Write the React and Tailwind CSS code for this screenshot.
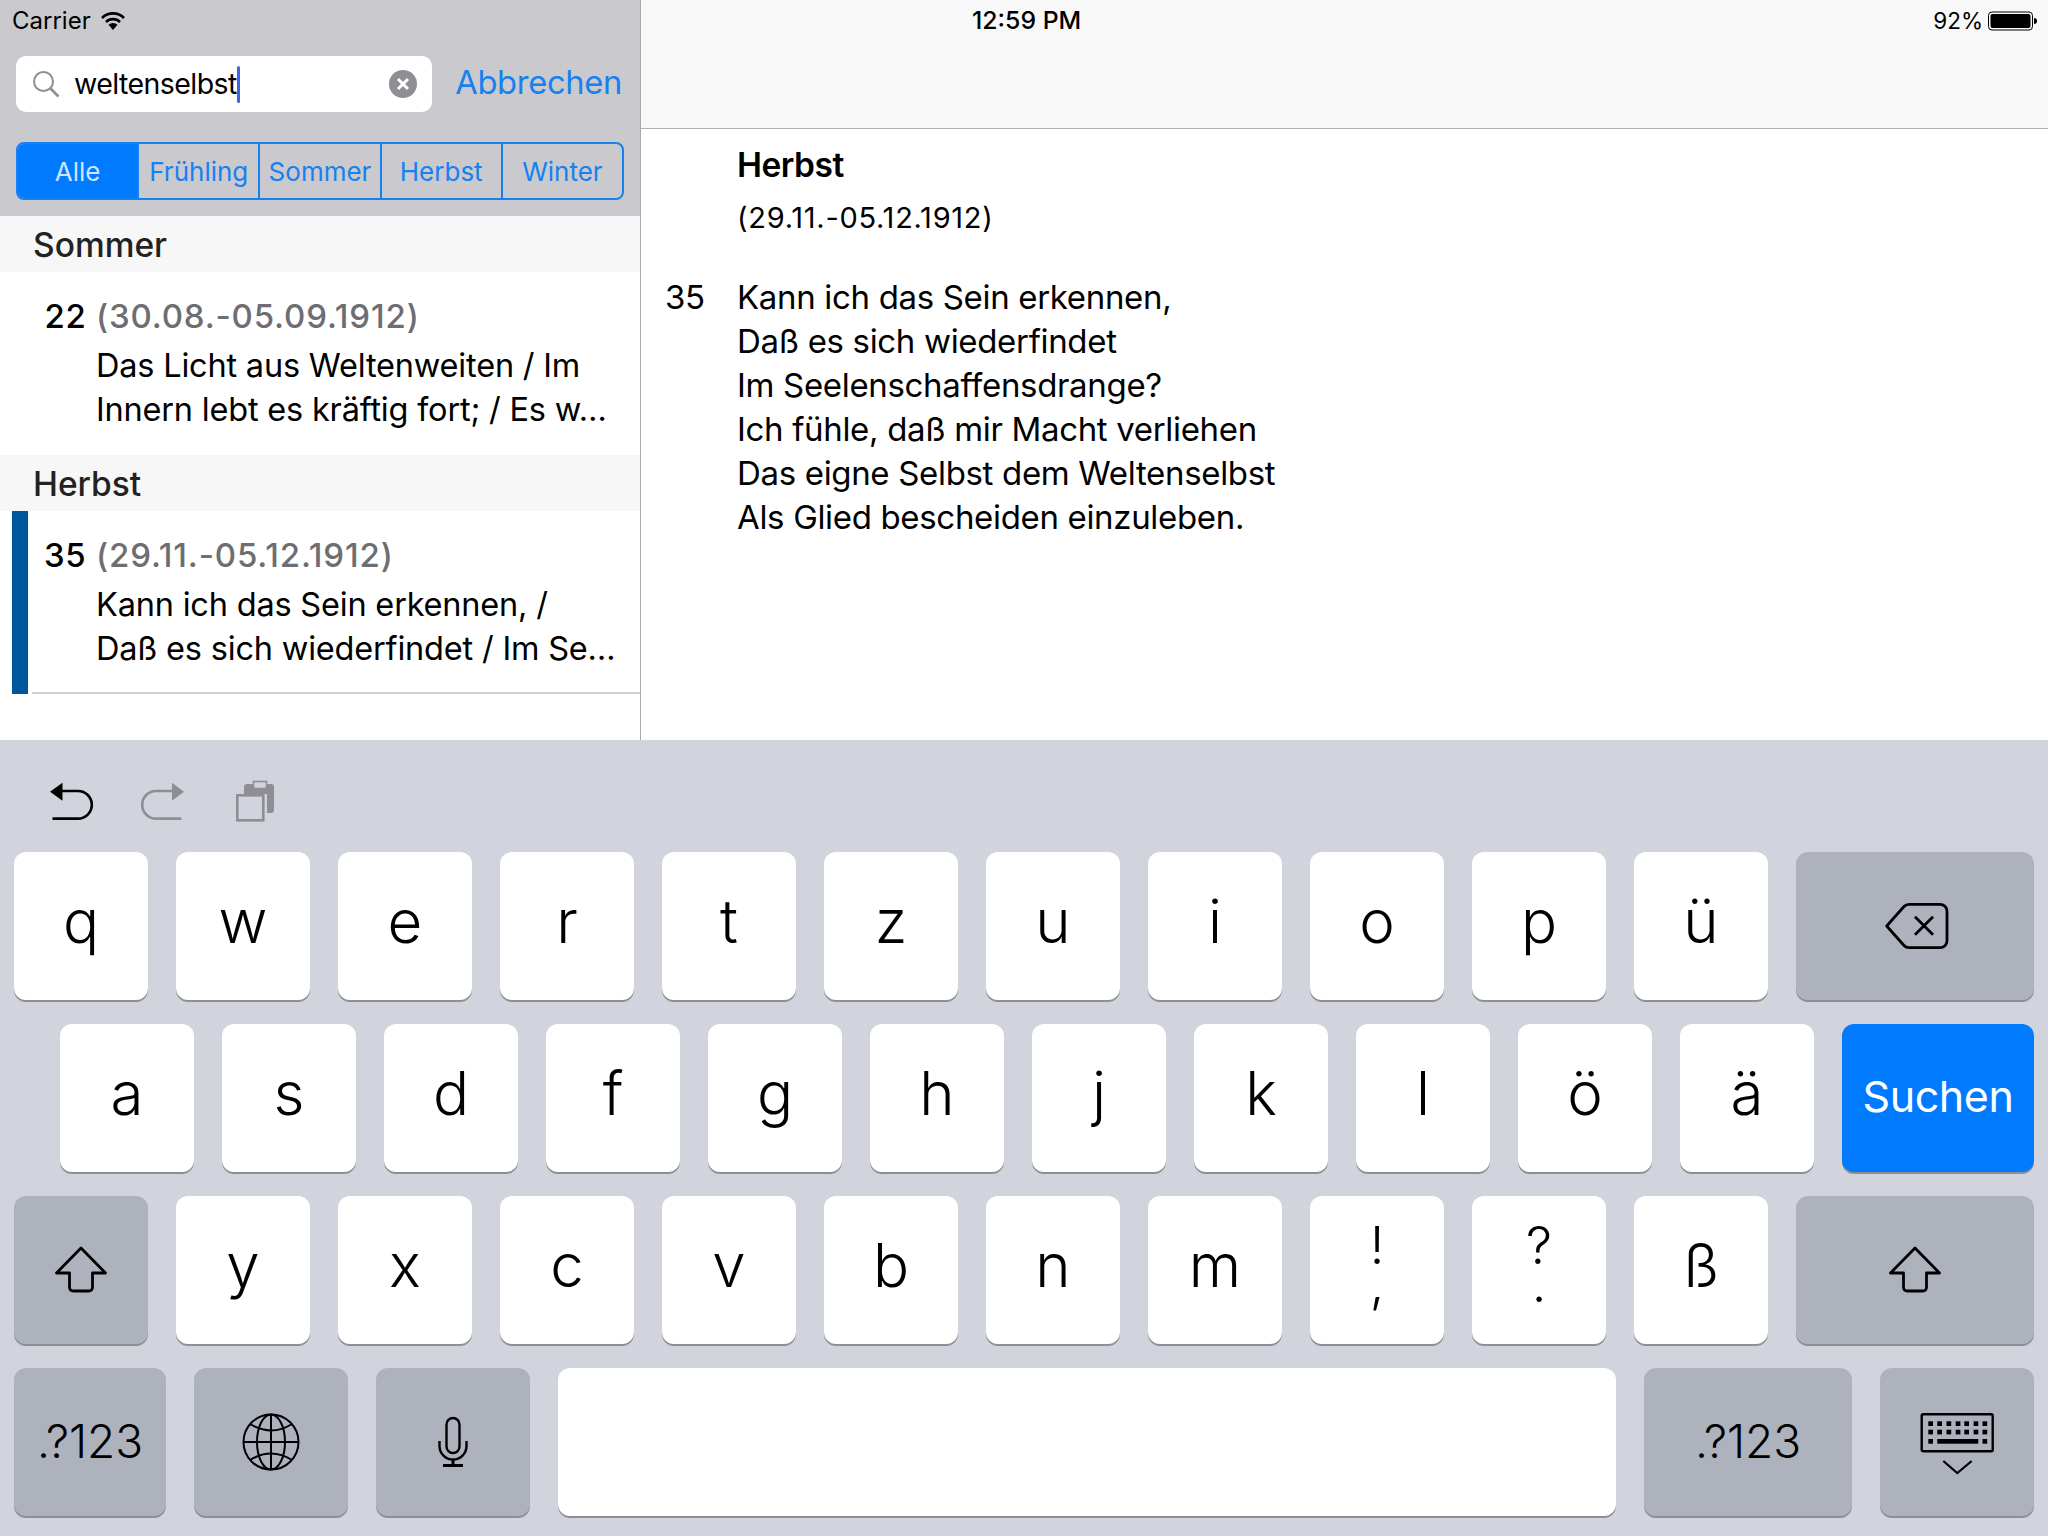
const F = "font-['Inter','Liberation_Sans',sans-serif]";

function Wifi() {
  return (
    <svg width="24" height="18" viewBox="0 0 24 18" fill="none" stroke="#000" strokeWidth="2.6">
      <path d="M1 6 A15.5 15.5 0 0 1 23 6" />
      <path d="M5 10 A10 10 0 0 1 19 10" />
      <path d="M12 18 L7.5 12.8 A6.5 6.5 0 0 1 16.5 12.8 Z" fill="#000" stroke="none" />
    </svg>
  );
}

function SearchIcon() {
  return (
    <svg width="28" height="28" viewBox="0 0 28 28" fill="none" stroke="#8e8e93" strokeWidth="2">
      <circle cx="11.5" cy="11.5" r="9.5" />
      <path d="M18.5 18.5 L26.5 26.5" strokeWidth="2.6" />
    </svg>
  );
}

function Battery() {
  return (
    <svg width="49" height="20" viewBox="0 0 49 20">
      <rect x="0.5" y="1" width="44" height="18" rx="3.5" fill="none" stroke="#000" strokeWidth="1" />
      <rect x="2.5" y="3" width="40" height="14" rx="2" fill="#000" />
      <path d="M46 7 A3 3 0 0 1 46 13 Z" fill="#000" />
    </svg>
  );
}

function Undo() {
  return (
    <svg width="46" height="44" viewBox="48 40 46 44" fill="none" stroke="#000" strokeWidth="2.6">
      <path d="M50 51.7 L62.5 42.7 V60.7 Z" fill="#000" stroke="none" />
      <path d="M62 51 H78 A13.8 13.8 0 0 1 78 78.6 H52.5" />
    </svg>
  );
}

function Redo() {
  return (
    <svg width="46" height="44" viewBox="140 40 46 44" fill="none" stroke="#8e8e93" strokeWidth="2.6">
      <path d="M184 51.7 L172 42.7 V60.7 Z" fill="#8e8e93" stroke="none" />
      <path d="M172 51 H156 A13.8 13.8 0 0 0 156 78.6 H181.5" />
    </svg>
  );
}

function Paste() {
  return (
    <svg width="40" height="42" viewBox="235 41 40 42" fill="none">
      <path d="M244 55 V48 Q244 45 247 45 H271 Q274 45 274 48 V71 Q274 74 271 74 H267 V55 Z" fill="#8e8e93" />
      <rect x="253.5" y="42.5" width="13" height="7" fill="#d1d4dc" stroke="#8e8e93" strokeWidth="1.6" />
      <rect x="237.3" y="56.3" width="26" height="25" stroke="#8e8e93" strokeWidth="2.6" />
    </svg>
  );
}

function Backspace() {
  return (
    <svg width="68" height="50" viewBox="0 0 68 50" fill="none" stroke="#000" strokeWidth="2.8" strokeLinejoin="round">
      <path d="M5.7 25 L23 5.5 Q25 3.3 28 3.3 H59 A7 7 0 0 1 66 10.3 V39.7 A7 7 0 0 1 59 46.7 H28 Q25 46.7 23 44.5 Z" />
      <path d="M34 15.7 L52 33.7 M52 15.7 L34 33.7" />
    </svg>
  );
}

function Shift() {
  return (
    <svg width="56" height="48" viewBox="0 0 56 48" fill="none" stroke="#000" strokeWidth="2.8" strokeLinejoin="round">
      <path d="M28 2 L3.5 27 H16.5 V41 Q16.5 45 20.5 45 H35.5 Q39.5 45 39.5 41 V27 H52.5 Z" />
    </svg>
  );
}

function Globe() {
  return (
    <svg width="58" height="58" viewBox="0 0 58 58" fill="none" stroke="#000" strokeWidth="2">
      <circle cx="29" cy="29" r="27.5" />
      <ellipse cx="29" cy="29" rx="14" ry="27.5" />
      <path d="M29 1.5 V56.5 M1.5 29 H56.5" />
      <path d="M8 11 Q29 24 50 11 M8 47 Q29 34 50 47" />
    </svg>
  );
}

function Mic() {
  return (
    <svg width="32" height="54" viewBox="0 0 32 54" fill="none" stroke="#000" strokeWidth="2.4">
      <rect x="9.5" y="3" width="13" height="35" rx="6.5" />
      <path d="M2.5 26 V31 A13.5 13.5 0 0 0 29.5 31 V26" />
      <path d="M16 44 V50 M6 50.5 H26" strokeWidth="3" />
    </svg>
  );
}

function KeyboardIcon() {
  const xs = [9.3, 18.3, 27.5, 36.7, 45.3, 54.6, 63.5];
  return (
    <svg width="76" height="66" viewBox="0 0 76 66" fill="none" className="mt-[4px]">
      <rect x="2.7" y="3.3" width="71" height="37" rx="1.5" stroke="#000" strokeWidth="2.4" />
      {xs.map((x) => (
        <rect key={`a${x}`} x={x} y="10.3" width="4.7" height="4.7" fill="#000" />
      ))}
      {xs.map((x) => (
        <rect key={`b${x}`} x={x} y="18.7" width="4.7" height="4.7" fill="#000" />
      ))}
      <rect x="9.3" y="28" width="4.7" height="4.7" fill="#000" />
      <rect x="18.3" y="28" width="41" height="4.7" fill="#000" />
      <rect x="63.5" y="28" width="4.7" height="4.7" fill="#000" />
      <path d="M24.3 50 L38.3 62 L52.7 50" stroke="#000" strokeWidth="2.2" />
    </svg>
  );
}

function Key({ children, dark, blue, w = "w-[134px]", cls = "" }) {
  const tone = blue
    ? "bg-[#007aff] text-white"
    : dark
      ? "bg-[#aeb2bd] text-black"
      : "bg-white text-black";
  return (
    <div
      className={`${w} ${tone} ${cls} h-[148px] shrink-0 rounded-[12px] shadow-[0_2px_0_#8e8e93] flex items-center justify-center text-[60px] font-light leading-none`}
    >
      {children}
    </div>
  );
}

function Letters({ list }) {
  return list.map((k) => (
    <Key key={k}>
      <span className="-mt-[10px]">{k}</span>
    </Key>
  ));
}

function Double({ top, bottom }) {
  return (
    <Key>
      <div className="text-center text-[52px] font-light leading-[38px] -mt-[10px]">
        {top}
        <br />
        {bottom}
      </div>
    </Key>
  );
}

function Seg({ children, active, first }) {
  return (
    <div
      className={`flex-1 h-full flex items-center justify-center text-[26px] ${first ? "" : "border-l-2 border-[#1681f0]"} ${active ? "bg-[#007aff] text-[#cfe4ff]" : "text-[#1681f0]"}`}
    >
      {children}
    </div>
  );
}

function SectionHead({ children }) {
  return (
    <div className="h-[56px] bg-[#f7f7f7] pl-[33px] pt-[3px] flex items-center text-[33.5px] font-medium text-[#222]">
      {children}
    </div>
  );
}

function RowText({ num, date, l1, l2 }) {
  return (
    <div className="pt-[22px]">
      <div className="h-[44px] flex items-center text-[33px] leading-none">
        <span className="w-[52px] font-medium text-black tabular-nums tracking-[-0.015em]">{num}</span>
        <span className="font-medium text-[#6e6e72] tracking-[0.025em]">{date}</span>
      </div>
      <div className="mt-[6px] pl-[52px] text-[32.5px] leading-[44px] text-black whitespace-nowrap tracking-[-0.006em]">
        <div>{l1}</div>
        <div>{l2}</div>
      </div>
    </div>
  );
}

export default function App() {
  return (
    <div className={`${F} w-[2048px] h-[1536px] overflow-hidden flex flex-col bg-white`}>
      <div className="h-[740px] flex">
        <div className="w-[641px] border-r border-[#a9a9ab] flex flex-col">
          <div className="h-[216px] bg-[#c9c9ce] flex flex-col">
            <div className="h-[40px] pl-[12px] pt-[2px] flex items-center gap-[10px] text-[24px] text-black">
              <span>Carrier</span>
              <Wifi />
            </div>
            <div className="mt-[16px] h-[56px] pl-[16px] pr-[18px] flex items-center justify-between">
              <div className="w-[416px] h-[56px] bg-white rounded-[10px] pl-[16px] pr-[15px] flex items-center">
                <SearchIcon />
                <div className="ml-[14px] flex items-center text-[28.5px] text-black tracking-[-0.02em]">
                  <span>weltenselbst</span>
                  <span className="w-[3px] h-[37px] bg-[#3f66e0] rounded-sm" />
                </div>
                <div className="ml-auto w-[28px] h-[28px] rounded-full bg-[#8e8e93] flex items-center justify-center">
                  <svg width="14" height="14" viewBox="0 0 14 14" stroke="#fff" strokeWidth="3">
                    <path d="M2 2 L12 12 M12 2 L2 12" />
                  </svg>
                </div>
              </div>
              <span className="text-[32.7px] text-[#1681f0] tracking-[-0.01em] -mt-[3px]">Abbrechen</span>
            </div>
            <div className="mt-[30px] mx-[16px] w-[608px] h-[58px] rounded-[8px] border-2 border-[#1681f0] flex overflow-hidden">
              <Seg active first>Alle</Seg>
              <Seg>Frühling</Seg>
              <Seg>Sommer</Seg>
              <Seg>Herbst</Seg>
              <Seg>Winter</Seg>
            </div>
          </div>
          <SectionHead>Sommer</SectionHead>
          <div className="h-[183px] pl-[44px]">
            <RowText
              num="22"
              date="(30.08.-05.09.1912)"
              l1="Das Licht aus Weltenweiten / Im"
              l2="Innern lebt es kräftig fort; / Es w…"
            />
          </div>
          <SectionHead>Herbst</SectionHead>
          <div className="h-[183px] flex">
            <div className="ml-[12px] w-[16px] bg-[#00569b]" />
            <div className="flex-1 ml-[4px] pl-[12px] border-b-2 border-[#d0d0d4]">
              <RowText
                num="35"
                date="(29.11.-05.12.1912)"
                l1="Kann ich das Sein erkennen, /"
                l2="Daß es sich wiederfindet / Im Se…"
              />
            </div>
          </div>
        </div>
        <div className="flex-1 flex flex-col">
          <div className="h-[129px] bg-[#f8f8f8] border-b border-[#b2b2b2]">
            <div className="h-[40px] pt-[1px] flex items-center pr-[11px] text-black">
              <span className="ml-[331px] font-medium text-[24.8px]">12:59 PM</span>
              <span className="ml-auto mr-[5px] text-[22.5px]">92%</span>
              <Battery />
            </div>
          </div>
          <div className="pl-[96px] pt-[14px] text-black relative">
            <div className="h-[44px] flex items-center text-[33.5px] font-semibold tracking-[-0.015em]">Herbst</div>
            <div className="mt-[9px] h-[44px] flex items-center text-[29px] tracking-[0.025em]">(29.11.-05.12.1912)</div>
            <div className="mt-[35px] flex -ml-[72px] text-[33px] leading-[44px] tracking-[-0.01em]">
              <div className="w-[72px]">35</div>
              <div>
                <div>Kann ich das Sein erkennen,</div>
                <div>Daß es sich wiederfindet</div>
                <div>Im Seelenschaffensdrange?</div>
                <div>Ich fühle, daß mir Macht verliehen</div>
                <div>Das eigne Selbst dem Weltenselbst</div>
                <div>Als Glied bescheiden einzuleben.</div>
              </div>
            </div>
          </div>
        </div>
      </div>

      <div className="flex-1 bg-[#d1d4dc] flex flex-col">
        <div className="h-[112px] pl-[48px] pt-[40px] flex items-start">
          <Undo />
          <div className="ml-[46px]"><Redo /></div>
          <div className="ml-[49px]"><Paste /></div>
        </div>
        <div className="flex gap-[28px] pl-[14px]">
          <Letters list={["q", "w", "e", "r", "t", "z", "u", "i", "o", "p", "ü"]} />
          <Key dark w="w-[238px]"><Backspace /></Key>
        </div>
        <div className="mt-[24px] flex gap-[28px] pl-[60px]">
          <Letters list={["a", "s", "d", "f", "g", "h", "j", "k", "l", "ö", "ä"]} />
          <Key blue w="w-[192px]" cls="!text-[43px] !font-normal tracking-[-0.01em] pb-[3px]">Suchen</Key>
        </div>
        <div className="mt-[24px] flex gap-[28px] pl-[14px]">
          <Key dark><Shift /></Key>
          <Letters list={["y", "x", "c", "v", "b", "n", "m"]} />
          <Double top="!" bottom="," />
          <Double top="?" bottom="." />
          <Letters list={["ß"]} />
          <Key dark w="w-[238px]"><Shift /></Key>
        </div>
        <div className="mt-[24px] flex gap-[28px] pl-[14px]">
          <Key dark w="w-[152px]" cls="!text-[46px] pb-[3px]">.?123</Key>
          <Key dark w="w-[154px]"><Globe /></Key>
          <Key dark w="w-[154px]"><Mic /></Key>
          <Key w="w-[1058px]" />
          <Key dark w="w-[208px]" cls="!text-[46px] pb-[3px]">.?123</Key>
          <Key dark w="w-[154px]"><KeyboardIcon /></Key>
        </div>
      </div>
    </div>
  );
}
